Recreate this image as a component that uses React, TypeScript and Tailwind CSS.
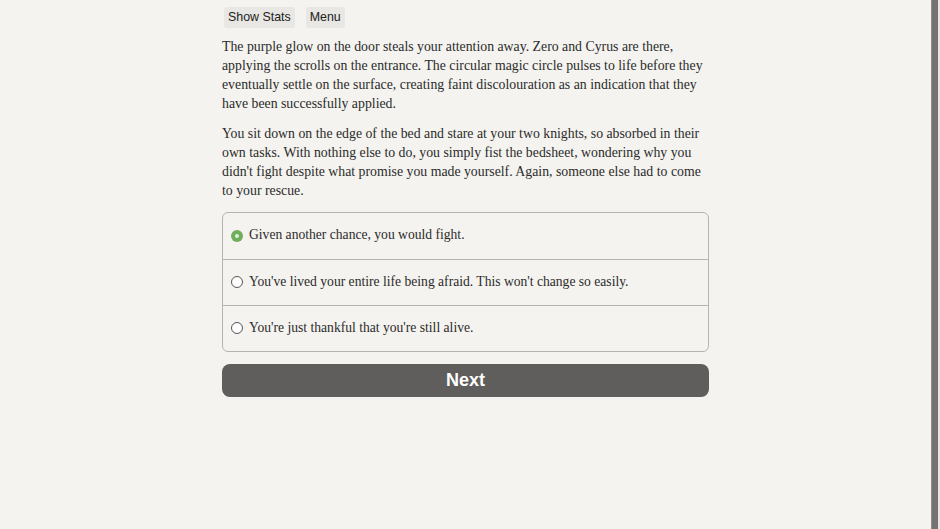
import React, { useState } from "react";

const choices = [
  "Given another chance, you would fight.",
  "You've lived your entire life being afraid. This won't change so easily.",
  "You're just thankful that you're still alive.",
];

const paragraphs = [
  [
    "The purple glow on the door steals your attention away. Zero and Cyrus are there,",
    "applying the scrolls on the entrance. The circular magic circle pulses to life before they",
    "eventually settle on the surface, creating faint discolouration as an indication that they",
    "have been successfully applied.",
  ],
  [
    "You sit down on the edge of the bed and stare at your two knights, so absorbed in their",
    "own tasks. With nothing else to do, you simply fist the bedsheet, wondering why you",
    "didn't fight despite what promise you made yourself. Again, someone else had to come",
    "to your rescue.",
  ],
];

function Radio({ checked }: { checked: boolean }) {
  if (checked) {
    return (
      <span className="flex h-[12px] w-[12px] shrink-0 items-center justify-center rounded-full bg-[#6fae5b]">
        <span className="h-[4px] w-[4px] rounded-full bg-[#dff0d8]" />
      </span>
    );
  }
  return <span className="h-[12px] w-[12px] shrink-0 rounded-full border border-[#555] bg-white" />;
}

export default function App() {
  const [picked, setPicked] = useState(0);

  return (
    <div className="flex h-[529px] w-[940px] overflow-hidden bg-[#f4f3ef]">
      <div className="flex-1">
        <div className="mx-auto w-[487px]">
          <div className="flex gap-[11px] pt-[7px] pl-[2px] font-['Liberation_Sans',sans-serif] text-[12.4px] text-[#222]">
            <button className="rounded-[3px] bg-[#e8e7e3] px-[4px] py-[1px]">Show Stats</button>
            <button className="rounded-[3px] bg-[#e8e7e3] px-[4px] py-[1px]">Menu</button>
          </div>

          <div className="mt-[9px] font-['Liberation_Serif',serif] text-[13.8px] leading-[19px] text-[#2b2b2b]">
            {paragraphs.map((lines, i) => (
              <p key={i} className={i > 0 ? "mt-[11px]" : ""}>
                {lines.map((l) => (
                  <span key={l} className="block whitespace-nowrap">
                    {l}
                  </span>
                ))}
              </p>
            ))}
          </div>

          <div className="mt-[12px] overflow-hidden rounded-[6px] border border-[#b5b4b0] font-['Liberation_Serif',serif] text-[13.6px] text-[#2b2b2b]">
            {choices.map((c, i) => (
              <label
                key={c}
                onClick={() => setPicked(i)}
                className={`flex h-[46px] cursor-pointer items-center gap-[6px] pl-[8px] ${
                  i > 0 ? "border-t border-[#b5b4b0]" : ""
                }`}
              >
                <Radio checked={picked === i} />
                <span>{c}</span>
              </label>
            ))}
          </div>

          <button className="mt-[12px] flex h-[33px] w-full items-center justify-center rounded-[8px] bg-[#5f5e5c] font-['Liberation_Sans',sans-serif] text-[18px] font-bold text-white">
            Next
          </button>
        </div>
      </div>
      <div className="h-full w-[7px] border-l border-[#8d8c89] bg-[#747371]" />
      <div className="h-full w-[2px] bg-[#e6e5e1]" />
    </div>
  );
}
